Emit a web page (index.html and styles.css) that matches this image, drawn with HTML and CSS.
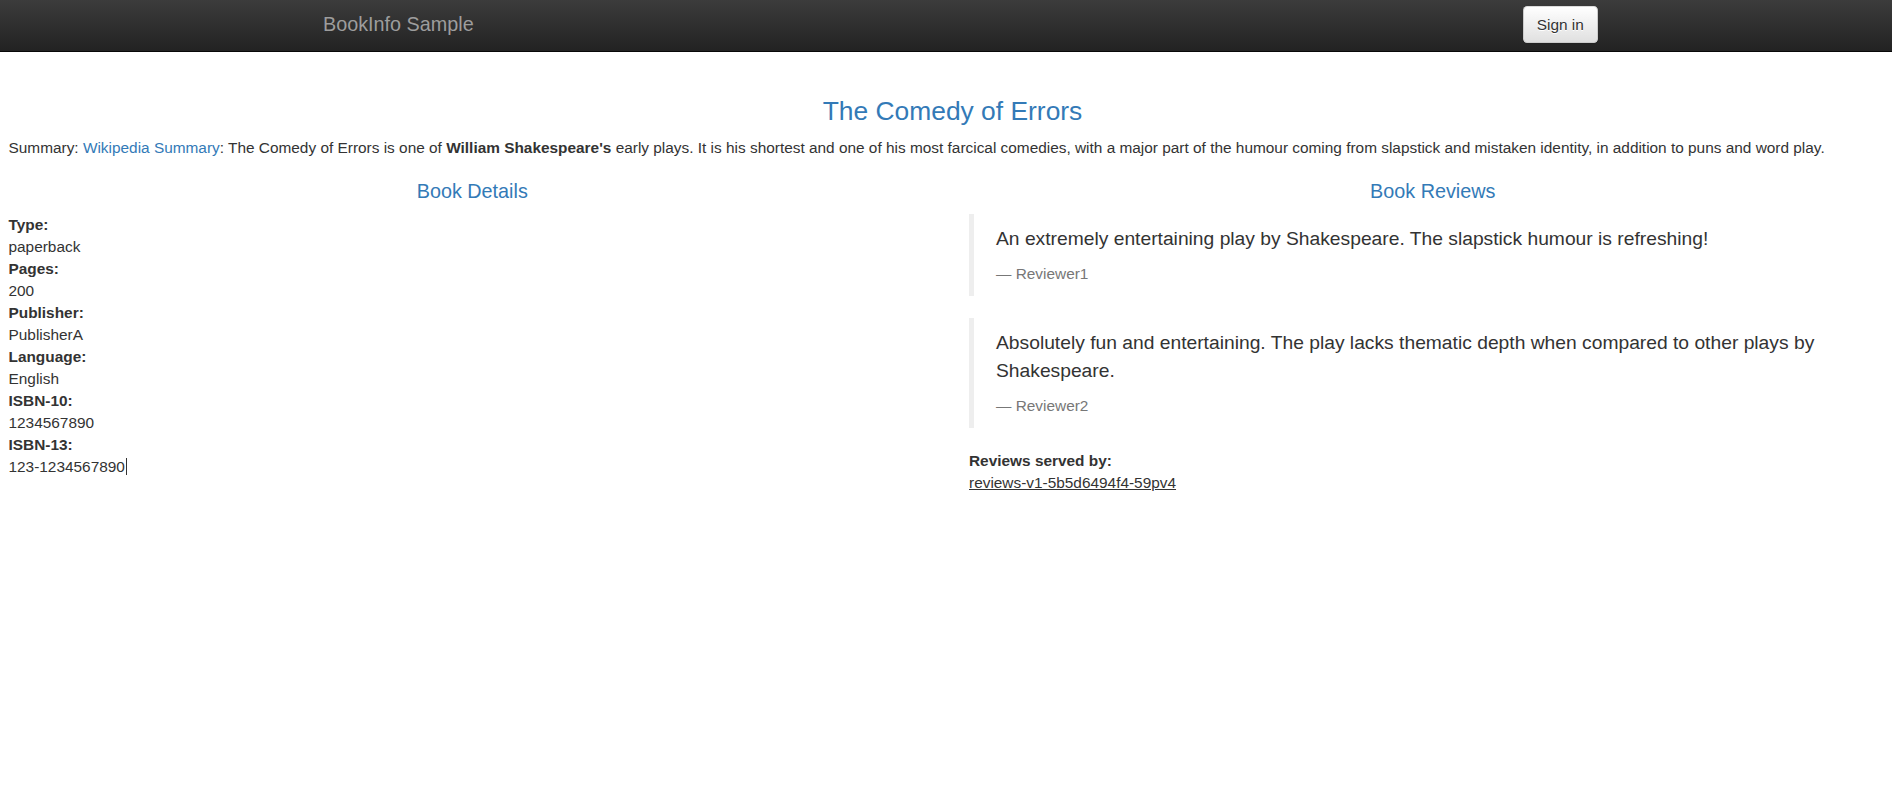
FILE: index.html
```html
<!DOCTYPE html>
<html lang="en">
<head>
    <meta charset="UTF-8">
    <meta name="viewport" content="width=device-width, initial-scale=1.0">
    <title>Simple Bookstore App</title>
    <link rel="stylesheet" href="styles.css">
</head>
<body>

    <nav class="navbar">
        <a class="navbar-brand" href="#">BookInfo Sample</a>
        <button type="button" class="btn-signin">Sign in</button>
    </nav>

    <div class="main">
        <div class="intro">
            <h3 class="book-title">The Comedy of Errors</h3>
            <p>Summary: <a href="#">Wikipedia Summary</a>: The Comedy of Errors is one of <b>William Shakespeare's</b> early plays. It is his shortest and one of his most farcical comedies, with a major part of the humour coming from slapstick and mistaken identity, in addition to puns and word play.</p>
        </div>

        <div class="columns">
            <div class="col details">
                <h4 class="section-title">Book Details</h4>
                <dl>
                    <dt>Type:</dt>paperback
                    <dt>Pages:</dt>200
                    <dt>Publisher:</dt>PublisherA
                    <dt>Language:</dt>English
                    <dt>ISBN-10:</dt>1234567890
                    <dt>ISBN-13:</dt>123-1234567890<span class="caret"></span>
                </dl>
            </div>

            <div class="col reviews">
                <h4 class="section-title">Book Reviews</h4>
                <blockquote>
                    <p>An extremely entertaining play by Shakespeare. The slapstick humour is refreshing!</p>
                    <small>Reviewer1</small>
                </blockquote>
                <blockquote>
                    <p>Absolutely fun and entertaining. The play lacks thematic depth when compared to other plays by Shakespeare.</p>
                    <small>Reviewer2</small>
                </blockquote>
                <dl>
                    <dt>Reviews served by:</dt>
                    <u>reviews-v1-5b5d6494f4-59pv4</u>
                </dl>
            </div>
        </div>
    </div>

</body>
</html>
```

FILE: styles.css
```css
html, body {
    overflow-x: hidden;
}

body {
    margin: 0;
    font-family: "Liberation Sans", Arial, Helvetica, sans-serif;
    font-size: 15.4px;
    line-height: 22px;
    color: #333;
    background-color: #fff;
}

a {
    color: #337ab7;
    text-decoration: none;
}

/* Top bar */
.navbar {
    display: flex;
    justify-content: space-between;
    align-items: flex-start;
    height: 51px;
    padding: 0 294px 0 323px;
    background-image: linear-gradient(to bottom, #3c3c3c 0, #222 100%);
    border-bottom: 1px solid #080808;
}

.navbar-brand {
    margin-top: 13px;
    font-size: 19.8px;
    line-height: 22px;
    color: #9d9d9d;
}

.btn-signin {
    margin-top: 6px;
    padding: 6.6px 13.2px;
    font-family: inherit;
    font-size: 15.4px;
    line-height: 22px;
    color: #333;
    background-image: linear-gradient(to bottom, #fff 0, #e0e0e0 100%);
    border: 1.1px solid #ccc;
    border-top-color: #dbdbdb;
    border-radius: 4.4px;
    box-shadow: inset 0 1px 0 rgba(255, 255, 255, 0.15), 0 1px 1px rgba(0, 0, 0, 0.075);
    text-shadow: 0 1px 0 #fff;
    cursor: pointer;
}

/* Page body */
.main {
    width: 1921px;
    margin-left: -8px;
    padding-top: 23px;
}

.intro {
    padding: 0 16.5px;
}

.book-title {
    margin: 21.5px 0 11.5px;
    font-size: 26.4px;
    font-weight: 500;
    line-height: 29px;
    text-align: center;
    color: #337ab7;
}

.intro p {
    margin: 0 0 11px;
}

.columns {
    display: grid;
    grid-template-columns: 1fr 1fr;
}

.col {
    padding: 0 16.5px;
}

.section-title {
    margin: 11px 0;
    font-size: 19.8px;
    font-weight: 500;
    line-height: 21.8px;
    text-align: center;
    color: #337ab7;
}

dl {
    margin: 0 0 22px;
}

dt {
    font-weight: 700;
}

.caret {
    display: inline-block;
    width: 0;
    height: 17px;
    margin-left: 1px;
    border-left: 1px solid #333;
    vertical-align: -3px;
}

blockquote {
    margin: 0 0 22px;
    padding: 11px 22px;
    border-left: 5.5px solid #eee;
    font-size: 19.25px;
    line-height: 27.5px;
}

blockquote p {
    margin: 0 0 11px;
}

blockquote small {
    display: block;
    font-size: 15.4px;
    line-height: 22px;
    color: #777;
}

blockquote small:before {
    content: "\2014 \00A0";
}
```
